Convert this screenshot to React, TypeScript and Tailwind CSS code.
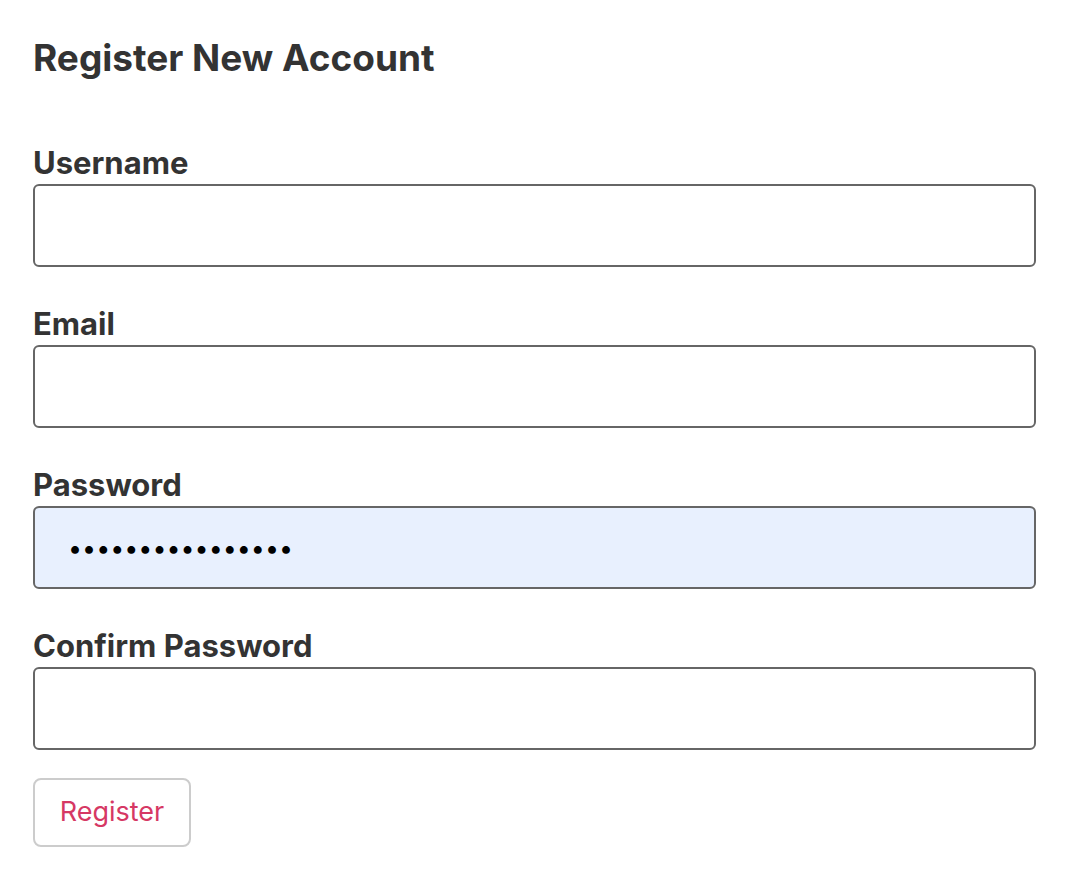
import React from "react";

const Field = ({ label, type = "text", value, filled }: { label: string; type?: string; value?: string; filled?: boolean }) => (
  <div className="flex flex-col">
    <label className="text-[31px] font-bold leading-[34px] text-[#333] mb-[4px]">{label}</label>
    <input
      type={type}
      defaultValue={value}
      readOnly
      className={`h-[83px] w-full rounded-[6px] border-2 border-[#666] px-[33px] text-[25px] text-black outline-none ${
        filled ? "bg-[#e8f0fe]" : "bg-white"
      }`}
    />
  </div>
);

const App = () => {
  return (
    <div className="min-h-screen bg-white px-[33px] pt-[36px] font-['Inter',sans-serif]">
      <h1 className="text-[37px] font-bold leading-[44px] text-[#333]">Register New Account</h1>
      <form className="mt-[66px] w-[1003px] flex flex-col gap-[40px]">
        <Field label="Username" />
        <Field label="Email" type="email" />
        <Field label="Password" type="password" value="aaaaaaaaaaaaaaaa" filled />
        <Field label="Confirm Password" type="password" />
      </form>
      <button className="mt-[28px] h-[69px] w-[158px] rounded-[8px] border-2 border-[#ccc] bg-white text-[27px] text-[#d63864]">
        Register
      </button>
    </div>
  );
};

export default App;
